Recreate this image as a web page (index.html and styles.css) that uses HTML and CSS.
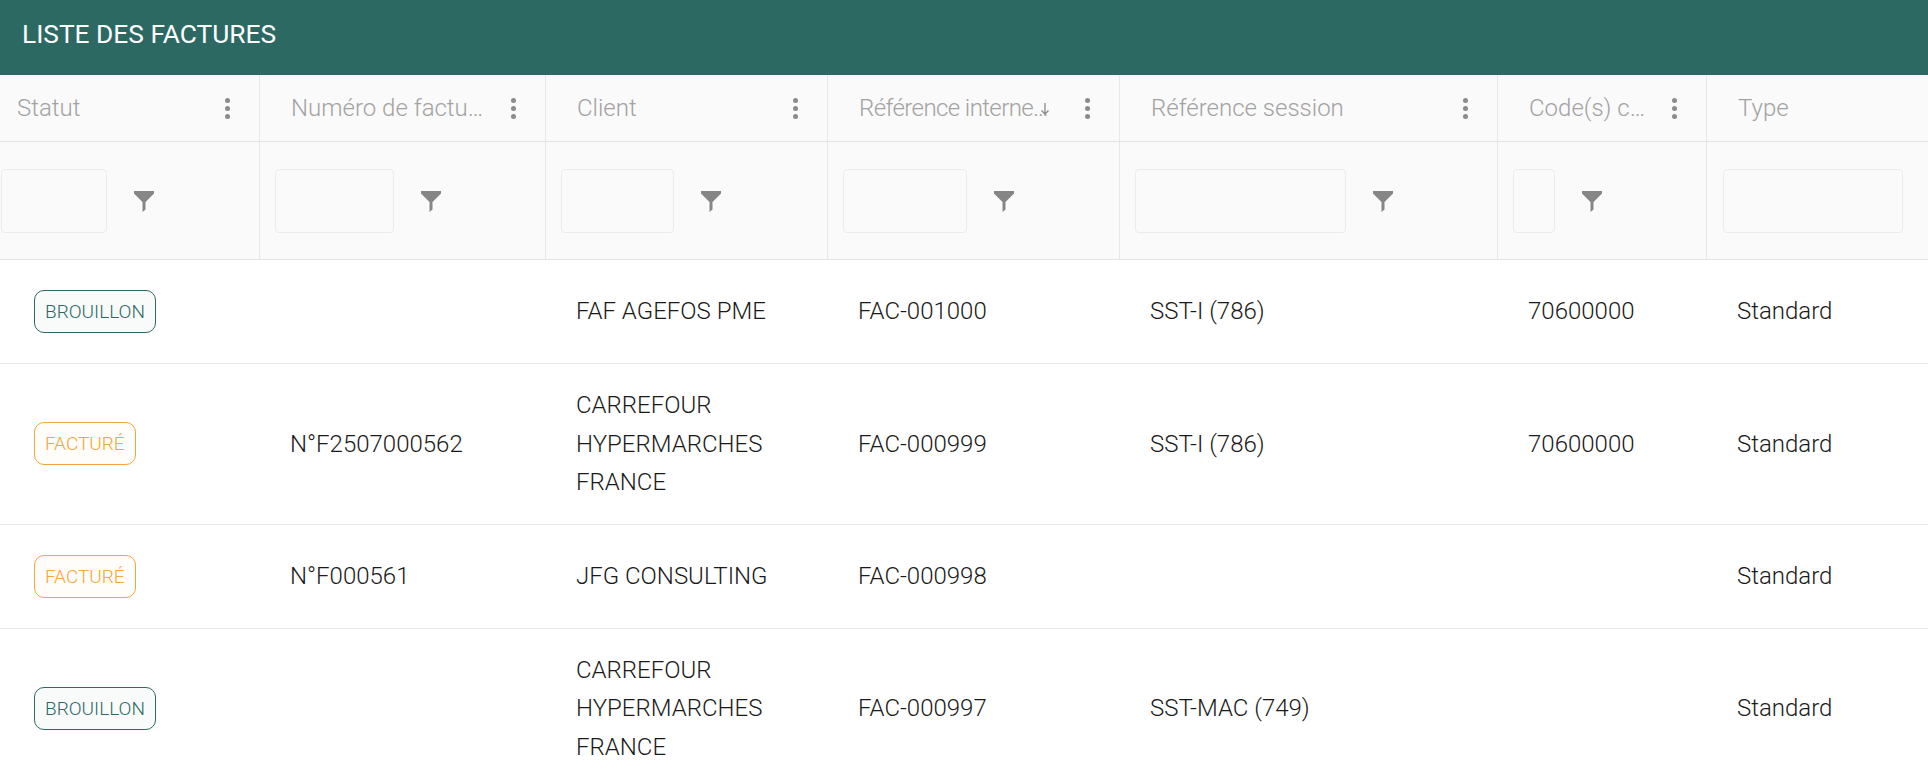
FILE: index.html
```html
<!DOCTYPE html>
<html lang="fr">
<head>
<meta charset="utf-8">
<title>Liste des factures</title>
<link rel="stylesheet" href="styles.css">
</head>
<body>
<div class="titlebar">LISTE DES FACTURES</div>
<div class="viewport">
  <div class="grid">
    <div class="hcell"><span class="hlabel">Statut</span><span class="dots"><i></i><i></i><i></i></span></div>
    <div class="hcell"><span class="hlabel">Numéro de facture</span><span class="dots"><i></i><i></i><i></i></span></div>
    <div class="hcell"><span class="hlabel">Client</span><span class="dots"><i></i><i></i><i></i></span></div>
    <div class="hcell"><span class="hlabel fixed">Référence interne…</span><svg class="sort" viewBox="0 0 10 12" width="10" height="12"><path d="M5 0v10M1.5 7.5L5 11l3.5-3.5" fill="none" stroke="#8a8a8a" stroke-width="1.3"/></svg><span class="dots auto"><i></i><i></i><i></i></span></div>
    <div class="hcell"><span class="hlabel">Référence session</span><span class="dots"><i></i><i></i><i></i></span></div>
    <div class="hcell"><span class="hlabel">Code(s) comptable(s)</span><span class="dots"><i></i><i></i><i></i></span></div>
    <div class="hcell"><span class="hlabel">Type</span></div>

    <div class="fcell"><span class="finput w1"></span><svg class="funnel" viewBox="0 0 20 21" width="20" height="21"><path d="M0 0H20V2.5L11.5 11V18.5L8.5 21V11L0 2.5Z" fill="#868686"/></svg></div>
    <div class="fcell"><span class="finput w2"></span><svg class="funnel" viewBox="0 0 20 21" width="20" height="21"><path d="M0 0H20V2.5L11.5 11V18.5L8.5 21V11L0 2.5Z" fill="#868686"/></svg></div>
    <div class="fcell"><span class="finput w3"></span><svg class="funnel" viewBox="0 0 20 21" width="20" height="21"><path d="M0 0H20V2.5L11.5 11V18.5L8.5 21V11L0 2.5Z" fill="#868686"/></svg></div>
    <div class="fcell"><span class="finput w4"></span><svg class="funnel" viewBox="0 0 20 21" width="20" height="21"><path d="M0 0H20V2.5L11.5 11V18.5L8.5 21V11L0 2.5Z" fill="#868686"/></svg></div>
    <div class="fcell"><span class="finput w5"></span><svg class="funnel" viewBox="0 0 20 21" width="20" height="21"><path d="M0 0H20V2.5L11.5 11V18.5L8.5 21V11L0 2.5Z" fill="#868686"/></svg></div>
    <div class="fcell"><span class="finput w6"></span><svg class="funnel" viewBox="0 0 20 21" width="20" height="21"><path d="M0 0H20V2.5L11.5 11V18.5L8.5 21V11L0 2.5Z" fill="#868686"/></svg></div>
    <div class="fcell last"><span class="finput w7"></span></div>

    <div class="cell status"><span class="badge draft">BROUILLON</span></div>
    <div class="cell"></div>
    <div class="cell">FAF AGEFOS PME</div>
    <div class="cell">FAC-001000</div>
    <div class="cell">SST-I (786)</div>
    <div class="cell">70600000</div>
    <div class="cell">Standard</div>

    <div class="cell status"><span class="badge billed">FACTURÉ</span></div>
    <div class="cell">N°F2507000562</div>
    <div class="cell">CARREFOUR HYPERMARCHES FRANCE</div>
    <div class="cell">FAC-000999</div>
    <div class="cell">SST-I (786)</div>
    <div class="cell">70600000</div>
    <div class="cell">Standard</div>

    <div class="cell status"><span class="badge billed">FACTURÉ</span></div>
    <div class="cell">N°F000561</div>
    <div class="cell">JFG CONSULTING</div>
    <div class="cell">FAC-000998</div>
    <div class="cell"></div>
    <div class="cell"></div>
    <div class="cell">Standard</div>

    <div class="cell status"><span class="badge draft">BROUILLON</span></div>
    <div class="cell"></div>
    <div class="cell">CARREFOUR HYPERMARCHES FRANCE</div>
    <div class="cell">FAC-000997</div>
    <div class="cell">SST-MAC (749)</div>
    <div class="cell"></div>
    <div class="cell">Standard</div>
  </div>
</div>
</body>
</html>
```

FILE: styles.css
```css
html, body {
  margin: 0;
  padding: 0;
  background: #ffffff;
}
body {
  font-family: Roboto, "Liberation Sans", sans-serif;
  color: #212121;
  width: 1928px;
  height: 784px;
  overflow: hidden;
}
.titlebar {
  height: 75px;
  box-sizing: border-box;
  background: #2c6963;
  color: #ffffff;
  font-size: 26.3px;
  font-weight: 400;
  padding-left: 22px;
  display: flex;
  align-items: center;
  padding-bottom: 8px;
}
.viewport {
  overflow: hidden;
  width: 1928px;
}
.grid {
  margin-left: -14px;
  display: grid;
  grid-template-columns: 274px 286px 282px 292px 378px 209px 348px;
  width: max-content;
}
.hcell {
  height: 67px;
  box-sizing: border-box;
  background: #fafafa;
  border-right: 1px solid #e8e8e8;
  border-bottom: 1px solid #e4e4e4;
  display: flex;
  align-items: center;
  padding: 0 29px 0 31px;
  color: #a2a2a2;
  font-size: 24px;
  font-weight: 300;
  min-width: 0;
}
.hlabel {
  flex: 1 1 auto;
  min-width: 0;
  white-space: nowrap;
  overflow: hidden;
  text-overflow: ellipsis;
}
.hlabel.fixed {
  flex: 0 1 auto;
  letter-spacing: -0.6px;
}
.sort {
  flex: none;
  margin-left: -8px;
  margin-top: 2px;
}
.dots {
  flex: none;
  display: flex;
  flex-direction: column;
  gap: 3px;
  margin-left: 26px;
}
.dots.auto {
  margin-left: auto;
}
.dots i {
  display: block;
  width: 5px;
  height: 5px;
  border-radius: 50%;
  background: #8a8a8a;
}
.fcell {
  height: 118px;
  box-sizing: border-box;
  background: #fafafa;
  border-right: 1px solid #e8e8e8;
  border-bottom: 1px solid #e4e4e4;
  display: flex;
  align-items: center;
  padding-left: 15px;
  gap: 27px;
}
.fcell.last {
  padding-left: 16px;
}
.finput {
  display: block;
  height: 64px;
  box-sizing: border-box;
  border: 1px solid #ececec;
  border-radius: 4px;
  background: #fafafa;
  margin-top: 1px;
}
.w1 { width: 106px; }
.w2 { width: 119px; }
.w3 { width: 113px; }
.w4 { width: 124px; }
.w5 { width: 211px; }
.w6 { width: 42px; }
.w7 { width: 180px; }
.funnel {
  flex: none;
  margin-top: 2px;
}
.cell {
  min-height: 104px;
  box-sizing: border-box;
  border-bottom: 1px solid #e6e6e6;
  display: flex;
  align-items: center;
  padding: 22px 30px 22px 30px;
  font-size: 24px;
  font-weight: 300;
  line-height: 38.5px;
  color: #1a1a1a;
}
.cell.status {
  padding-left: 48px;
}
.badge {
  display: inline-flex;
  align-items: center;
  height: 43px;
  box-sizing: border-box;
  padding: 0 10px;
  border: 1px solid;
  border-radius: 10px;
  font-size: 19px;
  font-weight: 300;
  line-height: 1;
}
.badge.draft {
  color: #2c6963;
  border-color: #2c6963;
  background: #f8fbfa;
}
.badge.billed {
  color: #f4a53b;
  border-color: #f4a53b;
  background: #fffdf9;
}
```
